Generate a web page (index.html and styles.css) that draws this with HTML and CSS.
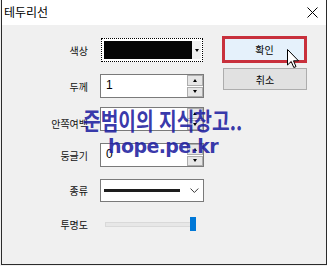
FILE: index.html
```html
<!DOCTYPE html>
<html lang="ko">
<head>
  <meta charset="UTF-8" />
  <title>테두리선</title>
  <link rel="stylesheet" href="styles.css">
</head>
<body>

<div class="window">
  <div class="titlebar">
    <span class="title">테두리선</span>
    <svg class="close" width="11" height="11" viewBox="0 0 11 11">
      <path d="M0.5 0.5 L10.5 10.5 M10.5 0.5 L0.5 10.5" stroke="#000" stroke-width="1" fill="none"/>
    </svg>
  </div>

  <div class="content">
    <div class="form">
      <div class="row">
        <label>색상</label>
        <div class="colorpick">
          <div class="swatch"></div>
          <div class="drop"><span class="tri-down"></span></div>
        </div>
      </div>

      <div class="row">
        <label>두께</label>
        <div class="spin">
          <span class="val">1</span>
          <div class="spin-btns">
            <div class="sb"><span class="tri-up"></span></div>
            <div class="sb"><span class="tri-down"></span></div>
          </div>
        </div>
      </div>

      <div class="row tight">
        <label class="low">안쪽여백</label>
        <div class="spin">
          <span class="val"></span>
          <div class="spin-btns">
            <div class="sb"><span class="tri-up"></span></div>
            <div class="sb"><span class="tri-down"></span></div>
          </div>
        </div>
      </div>

      <div class="row">
        <label>둥글기</label>
        <div class="spin">
          <span class="val">0</span>
          <div class="spin-btns">
            <div class="sb"><span class="tri-up"></span></div>
            <div class="sb"><span class="tri-down"></span></div>
          </div>
        </div>
      </div>

      <div class="row short">
        <label>종류</label>
        <div class="combo">
          <div class="line"></div>
          <svg class="chev" width="9" height="5" viewBox="0 0 9 5">
            <path d="M0.5 0.5 L4.5 4.5 L8.5 0.5" stroke="#333" stroke-width="1" fill="none"/>
          </svg>
        </div>
      </div>

      <div class="row tight2">
        <label>투명도</label>
        <div class="slider">
          <div class="track"></div>
          <div class="thumb"></div>
        </div>
      </div>
    </div>

    <div class="buttons">
      <button class="ok">확인</button>
      <button class="cancel">취소</button>
    </div>
  </div>

  <!-- 워터마크 -->
  <div class="watermark">
    <div class="wm1"><span>준범이의 지식창고..</span></div>
    <div class="wm2">hope.pe.kr</div>
  </div>

  <svg class="cursor" width="13" height="20" viewBox="0 0 13 20">
    <path d="M0.5 0.5 L0.5 16 L4.2 12.5 L6.8 18.5 L9 17.6 L6.5 11.8 L11.5 11.8 Z" fill="#fff" stroke="#000" stroke-width="1"/>
  </svg>
</div>

</body>
</html>
```

FILE: styles.css
```css
body {
  margin: 0;
  background: #f0f0f0;
  font-family: "Noto Sans CJK KR", "Liberation Sans", sans-serif;
}
.window {
  position: relative;
  width: 324px;
  height: 264px;
  margin-left: 1px;
  border: 1px solid #2b2b2b;
  border-top: none;
  background: #f0f0f0;
  overflow: hidden;
}
.titlebar {
  height: 25px;
  background: #fff;
  display: flex;
  align-items: center;
  justify-content: space-between;
  padding: 0 8px 0 2px;
}
.title {
  font-size: 12px;
  color: #000;
  margin-top: -2px;
}
.close {
  margin-top: -1px;
}
.content {
  display: flex;
  padding-top: 11px;
}
.form {
  padding-top: 2px;
}
.row {
  display: grid;
  grid-template-columns: 86px 104px;
  column-gap: 12px;
  height: 24px;
  align-items: center;
}
.row + .row {
  margin-top: 12px;
}
.row.tight {
  margin-top: 9px;
}
.row.short {
  height: 23px;
}
.row.tight2 {
  margin-top: 10px;
}
label {
  font-size: 10px;
  text-align: right;
  color: #111;
}
label.low {
  padding-top: 8px;
}

/* 색상 */
.colorpick {
  height: 24px;
  margin: 0 1px;
  box-sizing: border-box;
  border: 1px dotted #000;
  background: #fff;
  padding: 2px 1px 2px 2px;
  display: flex;
}
.swatch {
  flex: 1;
  background: #050505;
}
.drop {
  width: 9px;
  background: #f0f0f0;
  display: flex;
  align-items: center;
  justify-content: center;
}
.tri-down, .tri-up {
  width: 0;
  height: 0;
  border-left: 2.5px solid transparent;
  border-right: 2.5px solid transparent;
}
.tri-down {
  border-top: 3px solid #000;
}
.tri-up {
  border-bottom: 3px solid #000;
}

/* 숫자 입력 */
.spin {
  height: 24px;
  box-sizing: border-box;
  border: 1px solid #7a7a7a;
  background: #fff;
  display: flex;
  justify-content: space-between;
}
.val {
  font-family: "Liberation Sans", sans-serif;
  font-size: 12px;
  padding: 3px 0 0 5px;
}
.spin-btns {
  width: 16px;
  display: flex;
  flex-direction: column;
  gap: 1px;
}
.sb {
  flex: 1;
  border: 1px solid #adadad;
  background: #e6e6e6;
  display: flex;
  align-items: center;
  justify-content: center;
}

/* 종류 */
.combo {
  height: 23px;
  box-sizing: border-box;
  border: 1px solid #7a7a7a;
  background: #fff;
  display: flex;
  align-items: center;
  padding: 0 4px 0 3px;
  gap: 10px;
}
.line {
  width: 78px;
  height: 3px;
  background: #1e1e1e;
}

/* 투명도 */
.slider {
  height: 24px;
  display: flex;
  align-items: center;
  padding-left: 5px;
}
.track {
  width: 88px;
  height: 3px;
  background: #e7e7e7;
  border: 1px solid #d9d9d9;
}
.thumb {
  width: 6px;
  height: 14px;
  background: #0078d7;
  margin-left: -5px;
}

/* 버튼 */
.buttons {
  margin-left: 18px;
  display: flex;
  flex-direction: column;
}
button {
  font-family: "Noto Sans CJK KR", sans-serif;
  font-size: 10px;
  color: #000;
  padding: 0;
}
.ok {
  width: 85px;
  height: 27px;
  border: 3px solid #c8303c;
  background: #e5f1fb;
}
.cancel {
  width: 84px;
  height: 22px;
  margin: 5px 0 0 1px;
  border: 1px solid #adadad;
  background: #e1e1e1;
}

/* 오버레이 */
.watermark {
  position: absolute;
  left: 81px;
  top: 108px;
  color: rgba(30, 32, 160, 0.9);
  line-height: 1;
}
.wm1 {
  font-size: 24px;
  font-weight: 700;
  white-space: nowrap;
  height: 24px;
}
.wm1 span {
  display: inline-block;
  transform: scaleX(0.8);
  transform-origin: left center;
}
.wm2 {
  font-family: "DejaVu Sans", sans-serif;
  font-size: 19px;
  font-weight: 700;
  letter-spacing: -0.6px;
  margin: 5px 0 0 25px;
}
.cursor {
  position: absolute;
  left: 285px;
  top: 49px;
}
```
